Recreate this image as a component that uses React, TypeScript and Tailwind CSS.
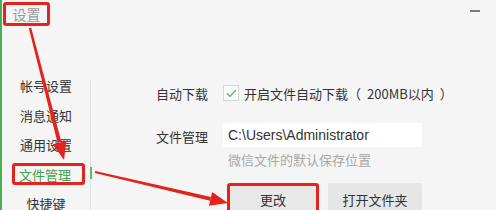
const navItems = ['帐号设置', '消息通知', '通用设置', '文件管理', '快捷键'];

const Arrows = () => (
    <svg className="absolute inset-0 pointer-events-none" width="496" height="210" viewBox="0 0 496 210">
        {/* from the 设置 title down to the sidebar */}
        <polygon points="29.2,27.7 26.8,28.3 55.6,143.1 59.4,142.1" fill="#e3241d" />
        <polygon points="62,160 64.3,140.9 50.7,144.3" fill="#e3241d" />
        {/* from the sidebar item to the 更改 button */}
        <polygon points="92.8,173 93.2,171 209,197 208,200.8" fill="#e3241d" />
        <polygon points="226,203 206.9,205.7 210.1,192.1" fill="#e3241d" />
    </svg>
);

const App = () => {
    const active = '文件管理';

    return (
        <div
            className="relative w-[496px] h-[210px] overflow-hidden bg-[#f5f5f5] border-l-2 border-[#4caf50] text-[#333]"
            style={{ fontFamily: '"Noto Sans CJK SC", "Noto Sans", sans-serif' }}
        >
            {/* title bar */}
            <div className="h-[71px] flex items-start justify-between">
                <div className="mt-[2px] ml-[1px] h-[24px] w-[47px] flex items-center justify-center border-[3px] border-[#e3241d] rounded-[3px]">
                    <span className="text-[14px] leading-none text-[#9a9a9a]">设置</span>
                </div>
                <div className="mt-[10px] mr-[16px] w-[10px] h-[2px] bg-[#7a7a7a]" />
            </div>

            <div className="flex">
                {/* sidebar */}
                <div className="w-[88px] flex flex-col">
                    {navItems.map((item) =>
                        item === active ? (
                            <div key={item} className="h-[29.5px] flex items-center pl-[10px]">
                                <div className="h-[22px] w-[73px] flex items-center pl-[4px] border-[3px] border-[#e3241d] rounded-[3px]">
                                    <span className="text-[13px] leading-none text-[#3fa34d]">{item}</span>
                                </div>
                            </div>
                        ) : (
                            <div key={item} className="h-[29.5px] flex items-center justify-center">
                                <span className="text-[13px] leading-none">{item}</span>
                            </div>
                        )
                    )}
                </div>

                {/* separator */}
                <div className="relative mt-[9px] w-px h-[140px] bg-[#e1e1e1]">
                    <div className="absolute left-0 top-[87px] w-[2px] h-[12px] bg-[#5cc05c]" />
                </div>

                {/* content */}
                <div className="flex-1 pl-[65px] pt-[12px] flex flex-col">
                    <div className="flex items-center h-[20px]">
                        <span className="w-[53px] text-[13px] leading-none">自动下载</span>
                        <div className="ml-[14px] w-[16px] h-[16px] border border-[#d6d6d6] bg-[#fafafa] flex items-center justify-center">
                            <svg width="11" height="9" viewBox="0 0 11 9">
                                <path d="M1 4.5 L4 7.5 L10 1" fill="none" stroke="#52b852" strokeWidth="1.2" />
                            </svg>
                        </div>
                        <span className="ml-[5px] text-[13px] leading-none whitespace-nowrap">
                            开启文件自动下载（<span className="mx-[6px]">200MB以内</span>）
                        </span>
                    </div>

                    <div className="mt-[20px] flex items-center">
                        <span className="w-[53px] text-[13px] leading-none mt-[3px]">文件管理</span>
                        <div className="ml-[14px] w-[199px] h-[24px] bg-white flex items-center pl-[5px]">
                            <span className="text-[14px] leading-none" style={{ fontFamily: '"Liberation Sans", sans-serif' }}>
                                C:\Users\Administrator
                            </span>
                        </div>
                    </div>

                    <div className="mt-[5px] ml-[72px] text-[13px] leading-[16px] text-[#a8a8a8]">微信文件的默认保存位置</div>

                    <div className="mt-[15px] ml-[71px] flex gap-[9px]">
                        <button className="w-[92px] h-[34px] bg-[#e8e8e8] border-[3px] border-[#e3241d] rounded-[3px] text-[13px] flex items-center justify-center">
                            更改
                        </button>
                        <button className="w-[94px] h-[34px] bg-[#e6e6e6] rounded-[2px] text-[13px] flex items-center justify-center">
                            打开文件夹
                        </button>
                    </div>
                </div>
            </div>

            <Arrows />
        </div>
    );
};

export default App;
